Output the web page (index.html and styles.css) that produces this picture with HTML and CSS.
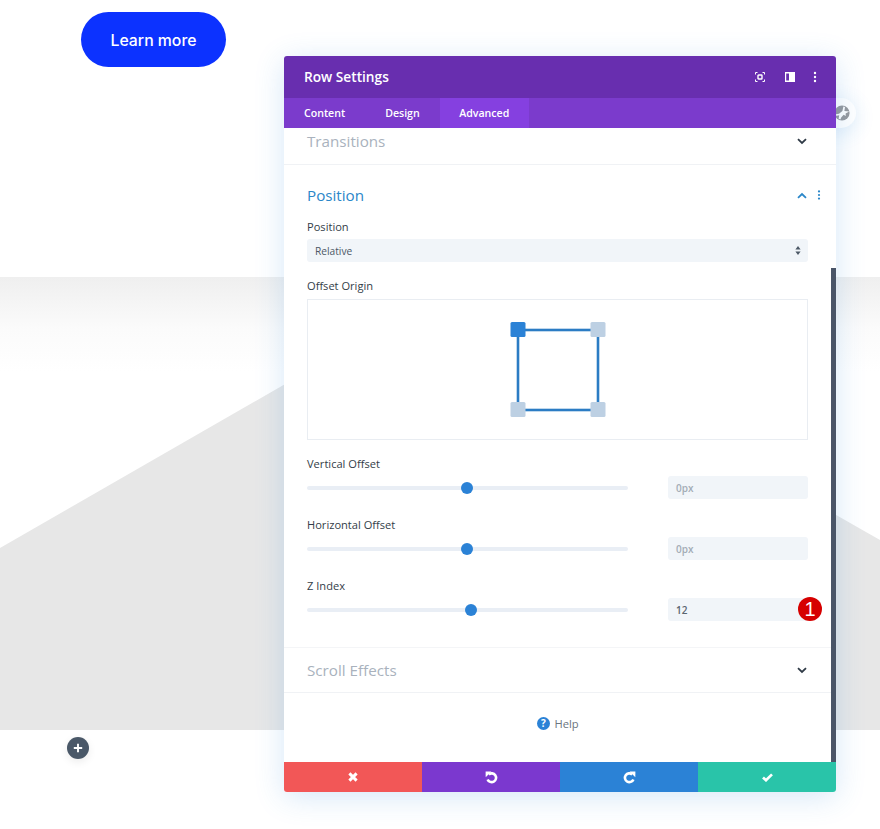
FILE: index.html
```html
<!DOCTYPE html>
<html lang="en">
<head>
<meta charset="utf-8">
<title>Row Settings</title>
<link rel="stylesheet" href="styles.css">
</head>
<body>
<div class="page">
  <header class="hero">
    <a class="cta">Learn more</a>
  </header>
  <section class="band">
    <svg class="band-shape" viewBox="0 0 880 453" preserveAspectRatio="none" aria-hidden="true">
      <polygon points="0,271 445,15 880,263 880,453 0,453" fill="#e7e7e7"/>
    </svg>
    <div class="band-fade"></div>
  </section>
  <button class="add-btn" aria-label="Add">
    <svg width="10" height="10" viewBox="0 0 10 10"><path d="M5 .8v8.4M.8 5h8.4" stroke="#fff" stroke-width="1.9"/></svg>
  </button>
  <div class="globe-tab">
    <svg width="16" height="16" viewBox="0 0 16 16"><circle cx="8" cy="8" r="7.6" fill="#97999d"/><path d="M.6 9.6 5 8.8 8.4 6l1-4.6 1.6.5-.6 4 4.8.6-3.6 2 .2 2.5-2.2-1.2-2.4 2.6-.8 2-1.8-.6.6-3.6-2.6.6z" fill="#fff"/></svg>
  </div>

  <div class="modal">
    <div class="modal-head">
      <h1 class="modal-title">Row Settings</h1>
      <div class="head-icons">
        <svg width="10" height="10" viewBox="0 0 10 10" fill="none" stroke="#fff" stroke-width="1"><path d="M.5 2.5V.5h2M7.5.5h2v2M9.5 7.5v2h-2M2.5 9.5h-2v-2"/><rect x="3" y="3" width="4" height="4" rx=".6" stroke-width="1.4"/></svg>
        <svg class="ic-cols" width="10" height="10" viewBox="0 0 10 10"><path fill="#fff" fill-rule="evenodd" d="M0 0h10v10H0zM1.2 1.4v7.2h2.8V1.4z"/></svg>
        <svg class="ic-dots" width="4" height="12" viewBox="0 0 4 12" fill="#fff"><circle cx="2" cy="2" r="1.2"/><circle cx="2" cy="6" r="1.2"/><circle cx="2" cy="10" r="1.2"/></svg>
      </div>
    </div>
    <nav class="tabs">
      <a class="tab">Content</a>
      <a class="tab">Design</a>
      <a class="tab tab-active">Advanced</a>
    </nav>
    <div class="modal-body">
      <div class="group group-cut">
        <h2 class="group-title">Transitions</h2>
        <svg class="chev" width="10" height="7" viewBox="0 0 10 7" fill="none" stroke="#2f3a46" stroke-width="1.8"><path d="M1 1.2 5 5l4-3.8"/></svg>
      </div>
      <div class="group-open">
        <div class="open-head">
          <h2 class="group-title title-blue">Position</h2>
          <svg class="chev" width="10" height="7" viewBox="0 0 10 7" fill="none" stroke="#2b87c9" stroke-width="1.8"><path d="M1 5.8 5 2l4 3.8"/></svg>
          <svg class="mini-dots" width="4" height="10" viewBox="0 0 4 10" fill="#2b87c9"><circle cx="2" cy="1.4" r="1.1"/><circle cx="2" cy="5" r="1.1"/><circle cx="2" cy="8.6" r="1.1"/></svg>
        </div>
        <div class="field field-tight">
          <label class="field-label">Position</label>
          <div class="select">
            <span>Relative</span>
            <svg width="6" height="9" viewBox="0 0 6 9" fill="#4c5866"><path d="M3 0l2.6 3.4H.4zM3 9 .4 5.6h5.2z"/></svg>
          </div>
        </div>
        <div class="field field-tight">
          <label class="field-label label-origin">Offset Origin</label>
          <div class="origin">
            <svg width="96" height="96" viewBox="0 0 96 96">
              <rect x="8" y="8" width="80" height="80" fill="none" stroke="#2b7cc4" stroke-width="2.6"/>
              <rect x="0.5" y="0" width="15" height="15" rx="1.5" fill="#2b82d6"/>
              <rect x="80.5" y="0" width="15" height="15" rx="1.5" fill="#bdd0e3"/>
              <rect x="0.5" y="80" width="15" height="15" rx="1.5" fill="#bdd0e3"/>
              <rect x="80.5" y="80" width="15" height="15" rx="1.5" fill="#bdd0e3"/>
            </svg>
          </div>
        </div>
        <div class="field">
          <label class="field-label">Vertical Offset</label>
          <div class="range-row">
            <div class="track"><span class="knob" style="left:49.8%"></span></div>
            <div class="num num-muted">0px</div>
          </div>
        </div>
        <div class="field">
          <label class="field-label">Horizontal Offset</label>
          <div class="range-row">
            <div class="track"><span class="knob" style="left:49.8%"></span></div>
            <div class="num num-muted">0px</div>
          </div>
        </div>
        <div class="field field-last">
          <label class="field-label">Z Index</label>
          <div class="range-row">
            <div class="track"><span class="knob" style="left:51.1%"></span></div>
            <div class="num">12</div>
          </div>
          <span class="badge">1</span>
        </div>
      </div>
      <div class="group group-scroll">
        <h2 class="group-title">Scroll Effects</h2>
        <svg class="chev" width="10" height="7" viewBox="0 0 10 7" fill="none" stroke="#2f3a46" stroke-width="1.8"><path d="M1 1.2 5 5l4-3.8"/></svg>
      </div>
      <div class="help">
        <svg width="13" height="13" viewBox="0 0 13 13"><circle cx="6.5" cy="6.5" r="6.5" fill="#2b82d6"/><text x="6.5" y="10" text-anchor="middle" class="help-q">?</text></svg>
        <span>Help</span>
      </div>
      <div class="scrollbar"></div>
    </div>
    <div class="modal-foot">
      <button class="foot-btn btn-red" aria-label="Cancel">
        <svg width="10" height="10" viewBox="0 0 10 10"><path d="M1.4 1.4l7.2 7.2M8.6 1.4 1.4 8.6" stroke="#fff" stroke-width="3"/></svg>
      </button>
      <button class="foot-btn btn-purple" aria-label="Undo">
        <svg width="13" height="13" viewBox="0 0 13 13" fill="none"><path d="M3.8 3.4A4.4 4.4 0 1 1 2.6 8.4" stroke="#fff" stroke-width="2.6"/><path d="M.6.6h5.8L.7 6.2z" fill="#fff"/></svg>
      </button>
      <button class="foot-btn btn-blue" aria-label="Redo">
        <svg width="13" height="13" viewBox="0 0 13 13" fill="none"><path d="M9.2 3.4A4.4 4.4 0 1 0 10.4 8.4" stroke="#fff" stroke-width="2.6"/><path d="M12.4.6H6.6l5.7 5.6z" fill="#fff"/></svg>
      </button>
      <button class="foot-btn btn-teal" aria-label="Save">
        <svg width="11" height="9" viewBox="0 0 11 9" fill="none"><path d="M1 4.4l3 2.8L10 1.4" stroke="#fff" stroke-width="2.7"/></svg>
      </button>
    </div>
  </div>
</div>
</body>
</html>
```
FILE: styles.css
```css
* { box-sizing: border-box; }
html, body { margin: 0; padding: 0; background: #fff; }
body { font-family: "Open Sans", "Liberation Sans", sans-serif; }
.page { position: relative; width: 880px; height: 829px; overflow: hidden; background: #fff; }

.hero { height: 277px; padding: 12px 0 0 81px; }
.cta {
  display: flex; align-items: center; justify-content: center;
  width: 145px; height: 55px; padding-top: 1px; border-radius: 28px;
  background: #0c32ff; color: #fff;
  font-family: Inter, "Open Sans", sans-serif; font-weight: 500; font-size: 15.8px;
}

.band { position: relative; height: 453px; background: #fff; }
.band-shape { position: absolute; inset: 0; width: 100%; height: 100%; display: block; }
.band-fade { position: absolute; left: 0; right: 0; top: 0; height: 95px; background: linear-gradient(#efefef, #fbfbfb 55%, rgba(255,255,255,0)); }

.add-btn {
  position: absolute; left: 67px; top: 737px; width: 22px; height: 22px; padding: 0;
  display: flex; align-items: center; justify-content: center;
  border: 0; border-radius: 50%; background: #4a5868;
  box-shadow: 0 3px 8px rgba(0,0,0,.08);
}
.globe-tab {
  position: absolute; left: 816px; top: 98px; width: 40px; height: 30px;
  display: flex; align-items: center; justify-content: flex-end; padding-right: 6px;
  border-radius: 15px; background: #fff;
  box-shadow: 0 4px 20px rgba(43,135,218,.16);
}

.modal {
  position: absolute; left: 284px; top: 56px; width: 552px; height: 736px;
  display: flex; flex-direction: column;
  border-radius: 3px; background: #fff;
  box-shadow: 0 5px 30px rgba(43,135,218,.2);
}
.modal-head {
  height: 42px; flex: none; display: flex; align-items: center; justify-content: space-between;
  padding: 0 19px 1px 20px; background: #682eaf; border-radius: 3px 3px 0 0; color: #fff;
}
.modal-title { margin: 0; font-size: 13.7px; font-weight: 600; color: #fff; }
.head-icons { display: flex; align-items: center; margin-top: 1px; }
.ic-cols { margin-left: 20px; }
.ic-dots { margin-left: 18px; }

.tabs { height: 30px; flex: none; display: flex; background: #7b3bcc; }
.tab { display: flex; align-items: center; padding: 0 20px; font-size: 10.6px; font-weight: 600; color: #fff; }
.tab-active { background: #8540e0; padding: 0 19.5px; }

.modal-body { position: relative; flex: 1; min-height: 0; }
.group { position: relative; display: flex; align-items: center; justify-content: space-between; padding: 0 29px 0 23px; border-bottom: 1px solid #f0f2f5; }
.group-cut { height: 37px; padding-bottom: 10px; }
.group-scroll { height: 45px; }
.group-title { margin: 0; font-size: 15.2px; font-weight: 400; line-height: 24px; color: #a9b2bd; }
.title-blue { color: #2b87c9; }
.chev { display: block; flex: none; }

.group-open { padding: 15px 28px 26px 23px; border-bottom: 1px solid #f4f5f7; }
.open-head { display: flex; align-items: center; height: 30px; margin-bottom: 8px; }
.open-head .group-title { flex: 1; }
.mini-dots { margin-left: 10px; margin-right: -13px; }

.field { position: relative; margin-bottom: 17px; }
.field-tight { margin-bottom: 15px; }
.field-last { margin-bottom: 0; }
.field-label { display: block; height: 18px; line-height: 18px; margin-bottom: 3px; font-size: 11.1px; font-weight: 500; color: #333d48; }
.label-origin { margin-bottom: 4px; }

.select {
  height: 23px; display: flex; align-items: center; justify-content: space-between;
  padding: 0 7px 0 8px; border-radius: 3px; background: #f1f5f9;
  font-size: 10.2px; font-weight: 500; color: #4c5866;
}
.origin {
  height: 141px; display: flex; align-items: center; justify-content: center;
  border: 1px solid #e9edf2; background: #fff;
}
.range-row { display: flex; align-items: center; gap: 40px; }
.track { position: relative; width: 321px; height: 4px; border-radius: 2px; background: #e9eef5; }
.knob { position: absolute; top: 50%; width: 12px; height: 12px; margin: -6px 0 0 -6px; border-radius: 50%; background: #2b82d6; }
.num {
  width: 140px; height: 23px; display: flex; align-items: center; padding: 0 8px;
  border-radius: 3px; background: #f1f5f9; font-size: 10px; font-weight: 600; color: #5a6570;
}
.num-muted { color: #a3acb6; }
.badge {
  position: absolute; right: -14px; top: 20px; width: 24px; height: 24px;
  display: flex; align-items: center; justify-content: center;
  border-radius: 50%; background: #d60000; color: #fff;
  font-family: "Liberation Sans", sans-serif; font-size: 20px; font-weight: 400;
}

.help {
  height: 69px; display: flex; align-items: center; justify-content: center; gap: 4px;
  padding: 0 4px 9px 0;
  font-size: 11.2px; font-weight: 500; color: #6b7580;
}
.help svg { display: block; }
.help-q { font-family: "Open Sans", sans-serif; font-size: 10px; font-weight: 700; fill: #fff; }
.scrollbar { position: absolute; right: 0; top: 140px; bottom: 0; width: 5px; background: #4a5568; }

.modal-foot { height: 30px; flex: none; display: flex; }
.foot-btn { flex: 1; display: flex; align-items: center; justify-content: center; padding: 0; border: 0; }
.btn-red { background: #f25757; border-radius: 0 0 0 3px; }
.btn-purple { background: #7b38cf; }
.btn-blue { background: #2b82d6; }
.btn-teal { background: #29c4a9; border-radius: 0 0 3px 0; }
```
